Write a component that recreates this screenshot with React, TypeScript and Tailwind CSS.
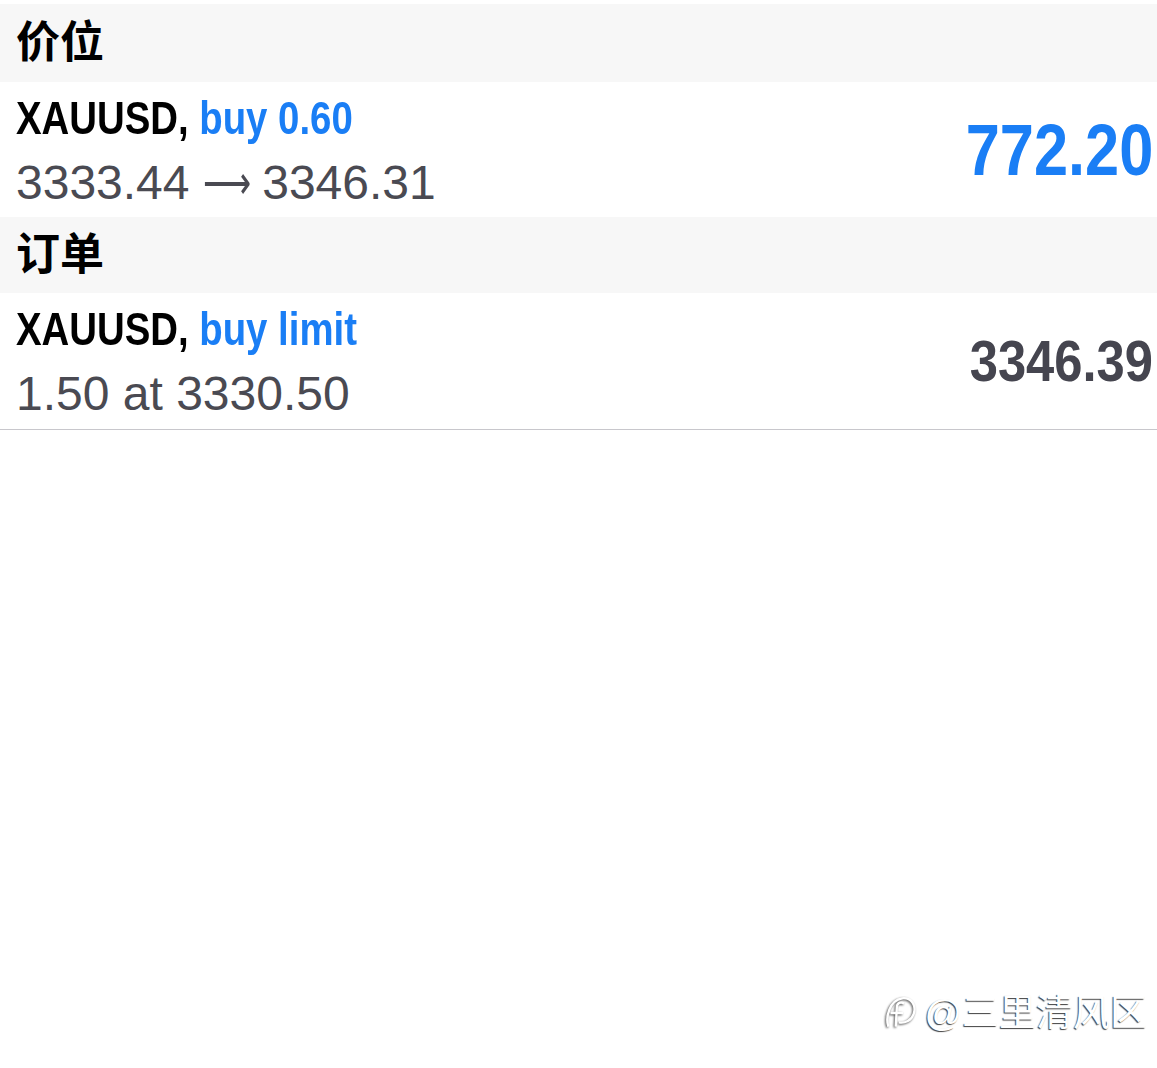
const SANS = "font-['Liberation_Sans','Noto_Sans_CJK_SC',sans-serif]";

function SectionHeader({ title, height }: { title: string; height: string }) {
  return (
    <div className={`flex items-center bg-[#f7f7f7] px-4 ${height}`}>
      <span className={`${SANS} text-[44px] font-bold leading-none text-black`}>{title}</span>
    </div>
  );
}

interface RowProps {
  action: string;
  detail: React.ReactNode;
  value: string;
  valueClass: string;
  height: string;
  bordered?: boolean;
}

function TradeRow({ action, detail, value, valueClass, height, bordered }: RowProps) {
  return (
    <div className={`flex items-center justify-between pl-4 pr-[4px] ${height} ${bordered ? 'border-b border-[#c8c7cc]' : ''}`}>
      <div className="flex flex-col">
        <div className={`${SANS} inline-block origin-left scale-x-[0.816] whitespace-nowrap text-[47px] font-bold leading-[65px]`}>
          <span className="text-black">XAUUSD,</span> <span className="text-[#1a7ef5]">{action}</span>
        </div>
        <div className={`${SANS} whitespace-nowrap text-[48px] leading-[65px] text-[#4a4a52]`}>{detail}</div>
      </div>
      <div className={`${SANS} inline-block origin-right font-bold leading-none ${valueClass}`}>{value}</div>
    </div>
  );
}

export default function App() {
  return (
    <div className="relative h-[1068px] w-[1157px] overflow-hidden bg-white pt-[4px]">
      <SectionHeader title="价位" height="h-[78px]" />
      <TradeRow
        action="buy 0.60"
        detail={
          <>
            3333.44{' '}
            <span className="inline-block w-[46px] origin-left scale-x-[0.7] font-['DejaVu_Sans',sans-serif] font-extralight">⟶</span>{' '}
            3346.31
          </>
        }
        value="772.20"
        valueClass="text-[73px] scale-x-[0.84] text-[#1a7ef5]"
        height="h-[135px]"
      />
      <SectionHeader title="订单" height="h-[76px]" />
      <TradeRow
        action="buy limit"
        detail="1.50 at 3330.50"
        value="3346.39"
        valueClass="text-[57px] scale-x-[0.89] text-[#45454f]"
        height="h-[137px]"
        bordered
      />

      {/* watermark */}
      <div className="absolute bottom-[34px] right-[10px] flex items-center gap-1">
        <svg width="38" height="42" viewBox="0 0 36 40" fill="none" className="drop-shadow-[-1px_1px_1px_rgba(0,0,0,0.7)]">
          <path d="M6 33 C3 24 7 8 19 6 C28 5 33 13 30 21 C28 27 22 30 16 29" stroke="#fff" strokeWidth="2.2" />
          <path d="M14 15 L13 33 M8 20 L20 20 M14 15 C14 10 18 9 21 11" stroke="#fff" strokeWidth="2.2" />
        </svg>
        <span className={`${SANS} text-[37px] leading-none text-white [text-shadow:-1px_1px_1px_rgba(0,0,0,0.75)]`}>
          @三里清风区
        </span>
      </div>
    </div>
  );
}
